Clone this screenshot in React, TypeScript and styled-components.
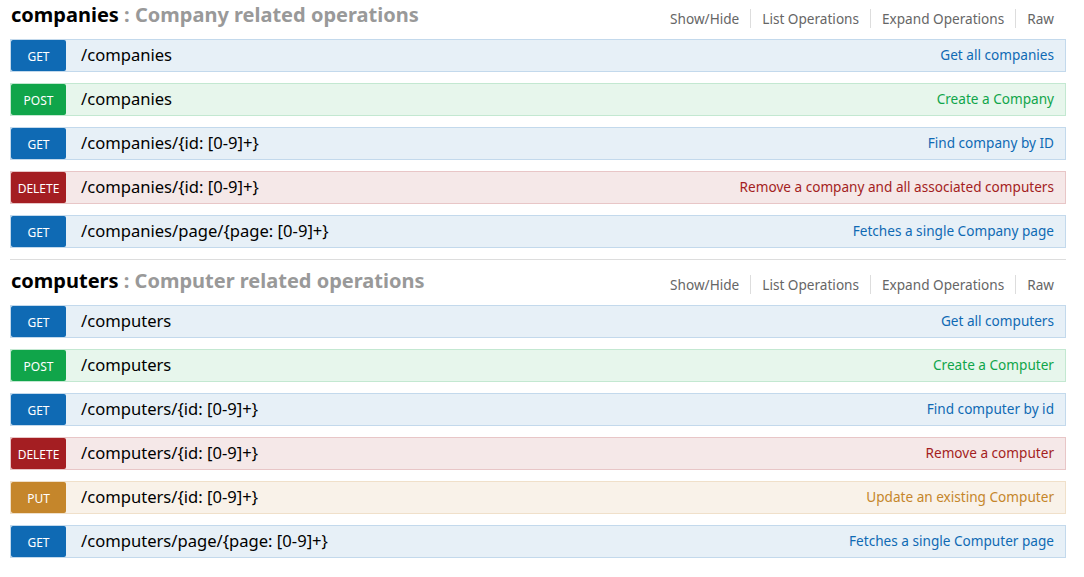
import React from "react";
import styled, { createGlobalStyle } from "styled-components";

const GlobalStyle = createGlobalStyle`
  html, body { margin: 0; padding: 0; background: #fff; }
  body { font-family: "Noto Sans", "Open Sans", sans-serif; color: #000; }
`;

type Method = "GET" | "POST" | "DELETE" | "PUT";

const palette: Record<Method, { main: string; bg: string; border: string }> = {
  GET: { main: "#0f6ab4", bg: "#e7f0f7", border: "#c3d9ec" },
  POST: { main: "#10a54a", bg: "#e7f6ec", border: "#c3e8d1" },
  DELETE: { main: "#a41e22", bg: "#f5e8e8", border: "#e8c6c7" },
  PUT: { main: "#c5862b", bg: "#f9f2e9", border: "#f0e0ca" },
};

const Wrap = styled.div`
  padding: 0 18px 0 10px;
`;

const Section = styled.section<{ $last?: boolean }>`
  border-bottom: ${(p) => (p.$last ? "none" : "1px solid #ddd")};
`;

const Header = styled.div<{ $top: number }>`
  display: flex;
  align-items: flex-end;
  justify-content: space-between;
  padding: ${(p) => p.$top}px 0 12px 1px;
`;

const Title = styled.h2`
  margin: 0;
  font-size: 20px;
  line-height: 24px;
  font-weight: 700;
  color: #000;
`;

const Desc = styled.span`
  color: #999;
`;

const Options = styled.ul`
  display: flex;
  list-style: none;
  margin: 0 0 -1px;
  padding: 0;
`;

const Option = styled.li`
  padding: 2px 11px 2px 11px;
  font-size: 13.6px;
  line-height: 15px;
  color: #666;
  border-right: 1px solid #ddd;
  &:last-child {
    border-right: none;
    padding-right: 12px;
  }
`;

const Row = styled.div<{ $m: Method }>`
  display: flex;
  align-items: center;
  height: 31px;
  border: 1px solid ${(p) => palette[p.$m].border};
  background: ${(p) => palette[p.$m].bg};
  margin-bottom: 11px;
`;

const Badge = styled.span<{ $m: Method }>`
  flex: none;
  width: 55px;
  height: 31px;
  box-sizing: border-box;
  padding-top: 2px;
  display: flex;
  align-items: center;
  justify-content: center;
  border-radius: 2px;
  background: ${(p) => palette[p.$m].main};
  color: #fff;
  font-size: 12px;
`;

const Path = styled.span`
  flex: 1;
  padding-left: 15px;
  padding-bottom: 2px;
  font-size: 16.6px;
  color: #000;
`;

const Summary = styled.span<{ $m: Method }>`
  padding-right: 11px;
  padding-bottom: 2px;
  font-size: 13.6px;
  color: ${(p) => palette[p.$m].main};
`;

type Op = { m: Method; path: string; summary: string };

const groups: { name: string; desc: string; ops: Op[] }[] = [
  {
    name: "companies",
    desc: "Company related operations",
    ops: [
      { m: "GET", path: "/companies", summary: "Get all companies" },
      { m: "POST", path: "/companies", summary: "Create a Company" },
      { m: "GET", path: "/companies/{id: [0-9]+}", summary: "Find company by ID" },
      {
        m: "DELETE",
        path: "/companies/{id: [0-9]+}",
        summary: "Remove a company and all associated computers",
      },
      {
        m: "GET",
        path: "/companies/page/{page: [0-9]+}",
        summary: "Fetches a single Company page",
      },
    ],
  },
  {
    name: "computers",
    desc: "Computer related operations",
    ops: [
      { m: "GET", path: "/computers", summary: "Get all computers" },
      { m: "POST", path: "/computers", summary: "Create a Computer" },
      { m: "GET", path: "/computers/{id: [0-9]+}", summary: "Find computer by id" },
      { m: "DELETE", path: "/computers/{id: [0-9]+}", summary: "Remove a computer" },
      { m: "PUT", path: "/computers/{id: [0-9]+}", summary: "Update an existing Computer" },
      {
        m: "GET",
        path: "/computers/page/{page: [0-9]+}",
        summary: "Fetches a single Computer page",
      },
    ],
  },
];

export default function App() {
  return (
    <Wrap>
      <GlobalStyle />
      {groups.map((g, gi) => (
        <Section key={g.name} $last={gi === groups.length - 1}>
          <Header $top={gi === 0 ? 3 : 9}>
            <Title>
              {g.name} <Desc>: {g.desc}</Desc>
            </Title>
            <Options>
              <Option>Show/Hide</Option>
              <Option>List Operations</Option>
              <Option>Expand Operations</Option>
              <Option>Raw</Option>
            </Options>
          </Header>
          {g.ops.map((o, i) => (
            <Row key={i} $m={o.m}>
              <Badge $m={o.m}>{o.m}</Badge>
              <Path>{o.path}</Path>
              <Summary $m={o.m}>{o.summary}</Summary>
            </Row>
          ))}
        </Section>
      ))}
    </Wrap>
  );
}
